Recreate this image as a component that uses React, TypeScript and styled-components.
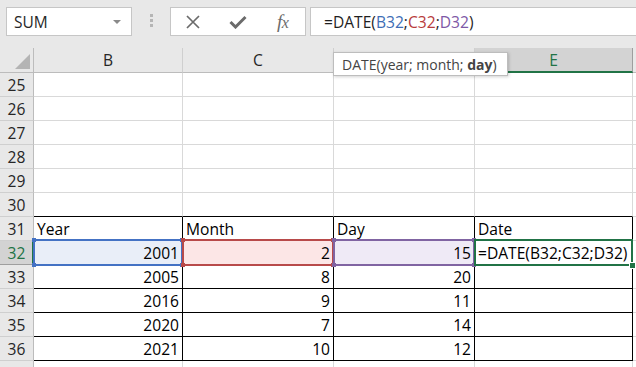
import React from "react";
import styled, { createGlobalStyle } from "styled-components";

const GlobalStyle = createGlobalStyle`
  html, body { margin: 0; padding: 0; background: #fff; overflow: hidden; }
  body { font-family: "Open Sans", "Noto Sans", sans-serif; }
`;

const GRID = "#d9d9d9";
const BLACK = "#000";
const GREEN = "#217346";

const Page = styled.div`
  position: relative;
  width: 636px;
  height: 367px;
  overflow: hidden;
  background: #fff;
`;

const Toolbar = styled.div`
  height: 48px;
  box-sizing: border-box;
  background: #e8e8e8;
  display: flex;
  align-items: flex-start;
  padding: 7px 0 0 6px;
`;

const NameBox = styled.div`
  box-sizing: border-box;
  flex: none;
  width: 126px;
  height: 29px;
  background: #fff;
  border: 1px solid #c6c6c6;
  display: flex;
  align-items: center;
  justify-content: space-between;
  padding: 0 10px 0 7px;
  font-size: 15.5px;
  color: #262626;
`;

const DropArrow = styled.span`
  width: 0;
  height: 0;
  border-left: 4px solid transparent;
  border-right: 4px solid transparent;
  border-top: 4px solid #8a8a8a;
`;

const Grip = styled.div`
  flex: none;
  display: flex;
  flex-direction: column;
  gap: 2px;
  margin: 7px 17px 0 18px;
`;

const GripDot = styled.span`
  width: 3px;
  height: 3px;
  background: #b5b5b5;
`;

const FxButtons = styled.div`
  box-sizing: border-box;
  flex: none;
  width: 136px;
  height: 29px;
  background: #fff;
  border: 1px solid #c6c6c6;
  display: flex;
  align-items: center;
`;

const FxSlot = styled.div`
  width: 45px;
  height: 100%;
  display: flex;
  align-items: center;
  justify-content: center;
  color: #6b6b6b;
`;

const FxText = styled.span`
  font-family: "Liberation Serif", "DejaVu Serif", serif;
  font-style: italic;
  font-size: 19px;
  color: #6b6b6b;
  letter-spacing: -0.5px;
  small {
    font-size: 16px;
  }
`;

const FormulaInput = styled.div`
  box-sizing: border-box;
  flex: 1;
  height: 29px;
  margin-left: 4px;
  background: #fff;
  border: 1px solid #c6c6c6;
  border-right: none;
  display: flex;
  align-items: center;
  padding-left: 13px;
  font-size: 15.6px;
  color: #1f1f1f;
  white-space: nowrap;
`;

const Ref = styled.span<{ $c: string }>`
  color: ${(p) => p.$c};
`;

const Sheet = styled.div`
  display: grid;
  grid-template-columns: 34px 149px 151px 141px 158px 1fr;
  grid-template-rows: 25px repeat(13, 24px);
  font-size: 15.6px;
  color: #000;
`;

const CornerCell = styled.div`
  box-sizing: border-box;
  background: #e8e8e8;
  border-right: 1px solid #bcbcbc;
  border-bottom: 1px solid #bcbcbc;
  display: flex;
  align-items: flex-end;
  justify-content: flex-end;
  padding: 0 3px 3px 0;
`;

const SelectAll = styled.span`
  width: 0;
  height: 0;
  border-left: 15px solid transparent;
  border-bottom: 15px solid #b4b4b4;
`;

const ColHeader = styled.div<{ $sel?: boolean }>`
  box-sizing: border-box;
  background: ${(p) => (p.$sel ? "#d3d3d3" : "#e8e8e8")};
  border-right: 1px solid ${(p) => (p.$sel ? "#9e9e9e" : "#cfcfcf")};
  border-bottom: ${(p) => (p.$sel ? `2px solid ${GREEN}` : "1px solid #bcbcbc")};
  color: ${(p) => (p.$sel ? GREEN : "#262626")};
  display: flex;
  align-items: center;
  justify-content: center;
  line-height: 20px;
`;

const RowHeader = styled.div<{ $sel?: boolean }>`
  box-sizing: border-box;
  background: ${(p) => (p.$sel ? "#d3d3d3" : "#e8e8e8")};
  border-right: ${(p) => (p.$sel ? `2px solid ${GREEN}` : "1px solid #bcbcbc")};
  border-bottom: 1px solid ${(p) => (p.$sel ? "#9e9e9e" : "#cfcfcf")};
  color: ${(p) => (p.$sel ? GREEN : "#262626")};
  display: flex;
  align-items: center;
  justify-content: center;
  line-height: 20px;
  padding-left: ${(p) => (p.$sel ? "1px" : "0")};
`;

const Cell = styled.div<{
  $right: string;
  $bottom: string;
  $align?: "left" | "right";
  $fill?: string;
}>`
  position: relative;
  box-sizing: border-box;
  background: ${(p) => p.$fill || "#fff"};
  border-right: 1px solid ${(p) => p.$right};
  border-bottom: 1px solid ${(p) => p.$bottom};
  display: flex;
  align-items: center;
  justify-content: ${(p) => (p.$align === "right" ? "flex-end" : "flex-start")};
  padding: 0 3px 0 3px;
  line-height: 20px;
  white-space: nowrap;
`;

const RefBox = styled.div<{ $color: string }>`
  position: absolute;
  top: -2px;
  bottom: -2px;
  left: -1px;
  right: -1px;
  border: 2px solid ${(p) => p.$color};
  pointer-events: none;
  z-index: 1;
`;

const Handle = styled.span<{ $color: string; $v: "top" | "bottom"; $h: "left" | "right" }>`
  position: absolute;
  width: 4px;
  height: 4px;
  background: ${(p) => p.$color};
  ${(p) => p.$v}: -3px;
  ${(p) => p.$h}: -3px;
`;

const FillHandle = styled.span`
  position: absolute;
  width: 5px;
  height: 5px;
  background: ${GREEN};
  border: 1px solid #fff;
  right: -5px;
  bottom: -5px;
`;

const Tooltip = styled.div`
  position: absolute;
  left: 333px;
  top: 52px;
  box-sizing: border-box;
  width: 175px;
  height: 24px;
  padding: 0 0 0 8px;
  background: #fff;
  border: 1px solid #bdbdbd;
  box-shadow: 1px 1px 3px rgba(0, 0, 0, 0.18);
  display: flex;
  align-items: center;
  font-size: 14px;
  color: #444;
  white-space: nowrap;
  z-index: 3;
  b {
    font-weight: 700;
  }
`;

type Row = { n: number; b?: string; c?: string; d?: string; e?: string };

const rows: Row[] = [
  { n: 25 },
  { n: 26 },
  { n: 27 },
  { n: 28 },
  { n: 29 },
  { n: 30 },
  { n: 31, b: "Year", c: "Month", d: "Day", e: "Date" },
  { n: 32, b: "2001", c: "2", d: "15", e: "=DATE(B32;C32;D32)" },
  { n: 33, b: "2005", c: "8", d: "20" },
  { n: 34, b: "2016", c: "9", d: "11" },
  { n: 35, b: "2020", c: "7", d: "14" },
  { n: 36, b: "2021", c: "10", d: "12" },
  { n: 37 },
];

const refs: Record<string, { color: string; fill?: string }> = {
  b: { color: "#4472c4", fill: "#e9eef8" },
  c: { color: "#b84a4a", fill: "#fce6e6" },
  d: { color: "#8064a2", fill: "#efeaf6" },
  e: { color: GREEN },
};

const Corners = ({ color }: { color: string }) => (
  <>
    <Handle $color={color} $v="top" $h="left" />
    <Handle $color={color} $v="top" $h="right" />
    <Handle $color={color} $v="bottom" $h="left" />
    <Handle $color={color} $v="bottom" $h="right" />
  </>
);

const CloseIcon = () => (
  <svg width="16" height="14" viewBox="0 0 16 14">
    <path d="M2 1 L14 13 M14 1 L2 13" stroke="#6b6b6b" strokeWidth="1.7" fill="none" />
  </svg>
);

const CheckIcon = () => (
  <svg width="18" height="14" viewBox="0 0 18 14">
    <path d="M1.5 7 L6.5 12 L16.5 2" stroke="#6b6b6b" strokeWidth="3" fill="none" />
  </svg>
);

export default function App() {
  const keys: ("b" | "c" | "d" | "e")[] = ["b", "c", "d", "e"];
  return (
    <Page>
      <GlobalStyle />
      <Toolbar>
        <NameBox>
          <span>SUM</span>
          <DropArrow />
        </NameBox>
        <Grip>
          <GripDot />
          <GripDot />
          <GripDot />
        </Grip>
        <FxButtons>
          <FxSlot>
            <CloseIcon />
          </FxSlot>
          <FxSlot>
            <CheckIcon />
          </FxSlot>
          <FxSlot>
            <FxText>
              f<small>x</small>
            </FxText>
          </FxSlot>
        </FxButtons>
        <FormulaInput>
          =DATE(<Ref $c="#3d6db5">B32</Ref>;<Ref $c="#b83c3c">C32</Ref>;
          <Ref $c="#7d58a6">D32</Ref>)
        </FormulaInput>
      </Toolbar>
      <Sheet>
        <CornerCell>
          <SelectAll />
        </CornerCell>
        <ColHeader>B</ColHeader>
        <ColHeader>C</ColHeader>
        <ColHeader>D</ColHeader>
        <ColHeader $sel>E</ColHeader>
        <ColHeader />
        {rows.map((r) => {
          const inTable = r.n >= 31 && r.n <= 36;
          const aboveTable = r.n === 30;
          const sel = r.n === 32;
          return (
            <React.Fragment key={r.n}>
              <RowHeader $sel={sel}>{r.n}</RowHeader>
              {keys.map((k) => {
                const val = r[k];
                const numeric = val !== undefined && /^\d+$/.test(val);
                const ref = sel ? refs[k] : undefined;
                return (
                  <Cell
                    key={k}
                    $right={inTable ? BLACK : GRID}
                    $bottom={inTable || aboveTable ? BLACK : GRID}
                    $align={numeric ? "right" : "left"}
                    $fill={ref?.fill}
                  >
                    {val}
                    {ref && (
                      <RefBox $color={ref.color}>
                        {k === "e" ? <FillHandle /> : <Corners color={ref.color} />}
                      </RefBox>
                    )}
                  </Cell>
                );
              })}
              <Cell $right={GRID} $bottom={GRID} />
            </React.Fragment>
          );
        })}
      </Sheet>
      <Tooltip>
        DATE(year; month;&nbsp;<b>day</b>)
      </Tooltip>
    </Page>
  );
}
